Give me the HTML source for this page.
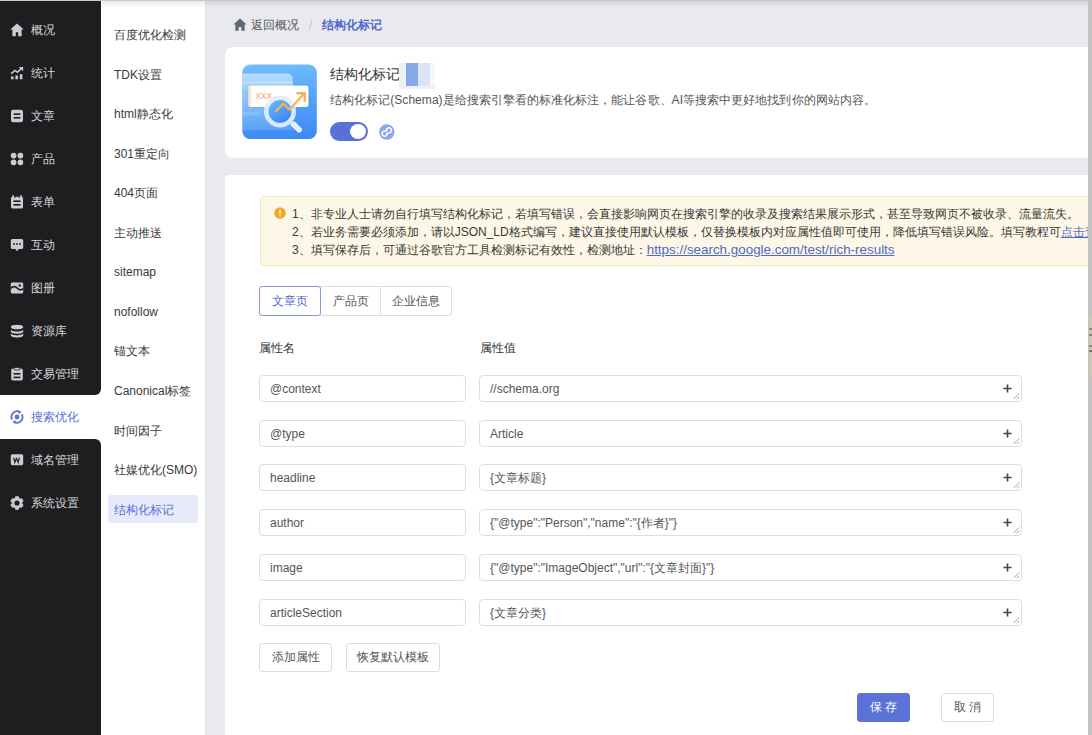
<!DOCTYPE html>
<html><head><meta charset="utf-8">
<style>
*{box-sizing:border-box;margin:0;padding:0}
html,body{width:1092px;height:735px;overflow:hidden;font-family:"Liberation Sans",sans-serif;font-size:12px;color:#333;background:#e9eaee}
.abs{position:absolute}
#side{position:absolute;left:0;top:0;width:101px;height:735px;background:#fff}
.dk{position:absolute;left:0;width:101px;background:#1e1e20}
.nav{position:absolute;left:0;width:101px;height:20px;color:#d6d6d8;font-size:12px;line-height:20px}
.nav svg{position:absolute;left:10px;top:3px;width:14px;height:14px}
.nav span{position:absolute;left:31px;top:0}
#sub{position:absolute;left:101px;top:0;width:104px;height:735px;background:#fff;box-shadow:1px 0 1px rgba(0,0,0,0.03)}
.si{position:absolute;left:13px;font-size:12px;line-height:16px;color:#3a3a3a;white-space:nowrap}
#topsh{position:absolute;left:102px;top:1px;width:990px;height:7px;background:linear-gradient(rgba(0,0,0,0.085),rgba(0,0,0,0))}
#topln{position:absolute;left:0;top:0;width:1092px;height:1px;background:#c8c8c8}
.card{position:absolute;background:#fff;border-radius:8px}
.inp{position:absolute;height:27px;border:1px solid #dedede;border-radius:4px;background:#fff;font-size:12px;line-height:27px;padding-left:10px;color:#555;white-space:nowrap}
.btn{position:absolute;height:30px;border:1px solid #dddddd;border-radius:3px;background:#fff;font-size:12px;line-height:28px;text-align:center;color:#555}
.plus{position:absolute;right:9px;top:8px;width:9px;height:9px}
.grip{position:absolute;right:1px;bottom:1px;width:8px;height:8px}
.lnk{color:#5169c4;text-decoration:underline}
</style></head><body>
<div id="side">
  <div class="dk" style="top:0;height:395px;border-bottom-right-radius:6px"></div>
  <div class="dk" style="top:439px;height:296px;border-top-right-radius:6px"></div>
  <div class="nav" style="top:20px"><svg viewBox="0 0 14 14"><path d="M7 0.6L0.3 6.6h2.1V13.2h3.4V9.3h2.4v3.9h3.4V6.6h2.1z" fill="#cdcdd1"/></svg><span>概况</span></div>
  <div class="nav" style="top:63px"><svg viewBox="0 0 14 14"><path d="M1 10.6h2.6v2.6H1zM5.4 9.4h2.6v3.8H5.4zM9.8 8.2h2.6v5H9.8z" fill="#cdcdd1"/><path d="M1.2 7.6L4.9 4.4l2.6 1.9L11.6 2.2" stroke="#cdcdd1" stroke-width="1.6" fill="none"/><path d="M8.8 0.9h4.3v4.3z" fill="#cdcdd1"/></svg><span>统计</span></div>
  <div class="nav" style="top:106px"><svg viewBox="0 0 14 14"><rect x="1" y="0.7" width="12" height="12.6" rx="2.2" fill="#cdcdd1"/><rect x="3.6" y="4.3" width="6.8" height="1.6" fill="#1e1e20"/><rect x="3.6" y="8" width="6.8" height="1.6" fill="#1e1e20"/></svg><span>文章</span></div>
  <div class="nav" style="top:149px"><svg viewBox="0 0 14 14"><rect x="0.8" y="0.8" width="5.6" height="5.6" rx="2.6" fill="#cdcdd1"/><rect x="7.6" y="0.8" width="5.6" height="5.6" rx="2.6" fill="#cdcdd1"/><rect x="0.8" y="7.6" width="5.6" height="5.6" rx="2.6" fill="#cdcdd1"/><rect x="7.6" y="7.6" width="5.6" height="5.6" rx="2.6" fill="#cdcdd1"/></svg><span>产品</span></div>
  <div class="nav" style="top:192px"><svg viewBox="0 0 14 14"><path d="M3 0.3v2M11 0.3v2" stroke="#cdcdd1" stroke-width="1.6"/><rect x="1" y="1.8" width="12" height="11.8" rx="1.6" fill="#cdcdd1"/><rect x="3.4" y="5.4" width="7.2" height="1.6" fill="#1e1e20"/><rect x="3.4" y="9" width="7.2" height="1.6" fill="#1e1e20"/><path d="M4.8 1.3v1.5M9.2 1.3v1.5" stroke="#1e1e20" stroke-width="1.2"/></svg><span>表单</span></div>
  <div class="nav" style="top:235px"><svg viewBox="0 0 14 14"><path d="M2.4 1h9.2A1.6 1.6 0 0 1 13.2 2.6v6.8A1.6 1.6 0 0 1 11.6 11H8.6L7 13.2 5.4 11H2.4A1.6 1.6 0 0 1 0.8 9.4V2.6A1.6 1.6 0 0 1 2.4 1z" fill="#cdcdd1"/><circle cx="4" cy="6" r="0.9" fill="#1e1e20"/><circle cx="7" cy="6" r="0.9" fill="#1e1e20"/><circle cx="10" cy="6" r="0.9" fill="#1e1e20"/></svg><span>互动</span></div>
  <div class="nav" style="top:278px"><svg viewBox="0 0 14 14"><path d="M2.2 1.4h9.6a1.4 1.4 0 0 1 1.4 1.4v8.4a1.4 1.4 0 0 1-1.4 1.4H2.2a1.4 1.4 0 0 1-1.4-1.4V2.8a1.4 1.4 0 0 1 1.4-1.4z" fill="#cdcdd1"/><path d="M0.8 7.4C3 5 5.5 5.2 7.4 7.2S11.4 9.2 13.2 7.6" stroke="#1e1e20" stroke-width="1.6" fill="none"/><circle cx="9.8" cy="4.4" r="1.2" fill="#1e1e20"/></svg><span>图册</span></div>
  <div class="nav" style="top:321px"><svg viewBox="0 0 14 14"><ellipse cx="7" cy="3" rx="6.2" ry="2.3" fill="#cdcdd1"/><path d="M0.8 5.3c0 1.3 2.8 2.3 6.2 2.3s6.2-1 6.2-2.3v2.2c0 1.3-2.8 2.3-6.2 2.3S0.8 8.8 0.8 7.5z" fill="#cdcdd1"/><path d="M0.8 9.1c0 1.3 2.8 2.3 6.2 2.3s6.2-1 6.2-2.3v2.2c0 1.3-2.8 2.3-6.2 2.3S0.8 12.6 0.8 11.3z" fill="#cdcdd1"/></svg><span>资源库</span></div>
  <div class="nav" style="top:364px"><svg viewBox="0 0 14 14"><rect x="1.2" y="1.6" width="11.6" height="12" rx="1.8" fill="#cdcdd1"/><rect x="4.2" y="0.4" width="5.6" height="2.6" rx="0.8" fill="#cdcdd1" stroke="#1e1e20" stroke-width="0.8"/><rect x="3.6" y="6" width="6.8" height="1.6" fill="#1e1e20"/><rect x="3.6" y="9.6" width="6.8" height="1.6" fill="#1e1e20"/></svg><span>交易管理</span></div>
  <div class="nav" style="top:407px;color:#5b6fd6"><svg viewBox="0 0 14 14"><path d="M2.2 9.6A5.6 5.6 0 0 1 9.8 2" stroke="#5b6fd6" stroke-width="1.8" fill="none"/><path d="M11.8 4.4A5.6 5.6 0 0 1 4.2 12" stroke="#5b6fd6" stroke-width="1.8" fill="none"/><path d="M8.4 0.3l3.2 1.8-3 2z" fill="#5b6fd6"/><path d="M5.6 13.7l-3.2-1.8 3-2z" fill="#5b6fd6"/><circle cx="7" cy="7" r="2.4" fill="#5b6fd6"/></svg><span>搜索优化</span></div>
  <div class="nav" style="top:450px"><svg viewBox="0 0 14 14"><rect x="0.8" y="1.2" width="12.4" height="11" rx="1.6" fill="#cdcdd1"/><path d="M3.6 4.6l1.2 4.8 1.6-4h0.2l1.6 4 1.2-4.8" stroke="#2a2a2c" stroke-width="1.25" fill="none"/></svg><span>域名管理</span></div>
  <div class="nav" style="top:493px"><svg viewBox="0 0 14 14"><path d="M5.56 0.76 L8.44 0.76 L8.84 2.46 L10.02 3.14 L11.68 2.64 L13.12 5.13 L11.85 6.32 L11.85 7.68 L13.12 8.87 L11.68 11.36 L10.02 10.86 L8.84 11.54 L8.44 13.24 L5.56 13.24 L5.16 11.54 L3.98 10.86 L2.32 11.36 L0.88 8.87 L2.15 7.68 L2.15 6.32 L0.88 5.13 L2.32 2.64 L3.98 3.14 L5.16 2.46Z" fill="#cdcdd1" stroke="#cdcdd1" stroke-width="1" stroke-linejoin="round"/><circle cx="7" cy="7" r="2.6" fill="#1e1e20"/></svg><span>系统设置</span></div>
</div>
<div id="sub">
  <div class="si" style="top:27px">百度优化检测</div>
  <div class="si" style="top:67px">TDK设置</div>
  <div class="si" style="top:106px">html静态化</div>
  <div class="si" style="top:146px">301重定向</div>
  <div class="si" style="top:185px">404页面</div>
  <div class="si" style="top:225px">主动推送</div>
  <div class="si" style="top:264px">sitemap</div>
  <div class="si" style="top:304px">nofollow</div>
  <div class="si" style="top:343px">锚文本</div>
  <div class="si" style="top:383px">Canonical标签</div>
  <div class="si" style="top:423px">时间因子</div>
  <div class="si" style="top:462px">社媒优化(SMO)</div>
  <div class="abs" style="left:7px;top:495px;width:90px;height:28px;background:#e7eafb;border-radius:3px"></div>
  <div class="si" style="top:502px;color:#5b6fd6">结构化标记</div>
</div>
<div id="topsh"></div><div id="topln"></div>

<!-- breadcrumb -->
<svg class="abs" style="left:233px;top:18px" width="14" height="13" viewBox="0 0 14 13"><path d="M7 0.6L0.4 6.6h2V12.8h3.2V9h2.8v3.8h3.2V6.6h2z" fill="#5f6672"/></svg>
<div class="abs" style="left:233px;top:18px;font-size:12px;line-height:14px;color:#555">
  <span style="position:absolute;left:18px;top:0;white-space:nowrap">返回概况</span>
  <span style="position:absolute;left:76px;top:0;color:#c0c4cc">/</span>
  <span style="position:absolute;left:89px;top:0;white-space:nowrap;color:#5368cf;font-weight:bold">结构化标记</span>
</div>

<!-- card 1 -->
<div class="card" style="left:225px;top:47px;width:900px;height:111px"></div>
<svg class="abs" style="left:242px;top:64px" width="75" height="75" viewBox="0 0 75 75">
  <defs><linearGradient id="g1" x1="0.2" y1="0" x2="0.3" y2="1"><stop offset="0" stop-color="#70bdfc"/><stop offset="1" stop-color="#3d8bf4"/></linearGradient>
  <linearGradient id="g3" x1="0" y1="0" x2="0" y2="1"><stop offset="0" stop-color="#c2e2fe" stop-opacity="0.85"/><stop offset="1" stop-color="#9dcffc" stop-opacity="0.25"/></linearGradient>
  <linearGradient id="g2" x1="0" y1="0" x2="0.6" y2="1"><stop offset="0" stop-color="#6fbafc"/><stop offset="1" stop-color="#3a89f3"/></linearGradient></defs>
  <rect x="0.3" y="0.6" width="74.5" height="74.5" rx="8" fill="url(#g1)"/>
  <path d="M0.3 9.5h45a5.5 5.5 0 0 1 5.5 5.5V66H0.3z" fill="url(#g3)"/><rect x="0.3" y="17" width="50.5" height="3" fill="#d2eafe" opacity="0.5"/>
  <rect x="0.3" y="27" width="14" height="3.4" fill="#8cc6fb" opacity="0.8"/>
  <rect x="0.3" y="48" width="17" height="3.4" fill="#8cc6fb" opacity="0.7"/>
  <rect x="6.5" y="21.5" width="60" height="21.5" rx="2" fill="#ffffff" style="filter:drop-shadow(0 0.5px 0.8px rgba(30,90,180,0.25))"/>
  <rect x="6.5" y="21.8" width="2.4" height="20.4" fill="#fde2c6"/>
  <text x="13.2" y="35" font-family="Liberation Sans" font-size="8.6" fill="#f2a061" textLength="17" lengthAdjust="spacingAndGlyphs">XXX</text>
  <path d="M51.5 60.2l5.6 5.6" stroke="#e3f1ff" stroke-width="5.6" stroke-linecap="round"/>
  <circle cx="38" cy="47.4" r="16" fill="#dfeffe" opacity="0.92"/>
  <circle cx="38" cy="47.4" r="11.4" fill="url(#g2)"/>
  <path d="M33.2 48L41.4 39.6 47.6 45.6 62 29.8" stroke="#f4b458" stroke-width="2.3" fill="none" stroke-linejoin="round"/>
  <path d="M54.4 29.2h8.4v8.6" stroke="#f4b458" stroke-width="2.4" fill="none" stroke-linejoin="miter"/>
</svg>
<div class="abs" style="left:330px;top:65px;font-size:14px;line-height:18px;color:#333">结构化标记</div>
<div class="abs" style="left:399px;top:63px;width:36px;height:26px;background:#eef0f4"></div><div class="abs" style="left:430px;top:63px;width:5px;height:23px;background:#f7f8fa"></div>
<div class="abs" style="left:406px;top:63px;width:12px;height:23px;background:#85a9e6"></div>
<div class="abs" style="left:418px;top:63px;width:12px;height:23px;background:#dce5f7"></div>
<div class="abs" style="left:330px;top:92px;font-size:12px;line-height:16px;color:#555;white-space:nowrap;letter-spacing:0.05px">结构化标记(Schema)是给搜索引擎看的标准化标注，能让谷歌、AI等搜索中更好地找到你的网站内容。</div>
<div class="abs" style="left:330px;top:122px;width:38px;height:19px;border-radius:10px;background:#5a70d4"></div>
<div class="abs" style="left:350px;top:124px;width:16px;height:15px;border-radius:50%;background:#fff"></div>
<svg class="abs" style="left:379px;top:123.5px" width="16" height="16" viewBox="0 0 16 16"><circle cx="7.8" cy="8" r="7.7" fill="#8da5ee"/><g stroke="#fff" stroke-width="1.5" fill="none" stroke-linecap="round"><path d="M7.3 6.1A2.6 2.6 0 1 1 9.2 8.9L7.6 9.6"/><path d="M8.3 9.9A2.6 2.6 0 1 1 6.4 7.1L8 6.4"/></g></svg>

<!-- card 2 -->
<div class="card" style="left:225px;top:175px;width:900px;height:600px;border-radius:4px"></div>
<div class="abs" style="left:260px;top:196px;width:840px;height:70px;background:#fdf7e7;border:1px solid #f6e8b4;border-radius:4px"></div>
<svg class="abs" style="left:274px;top:207px" width="12" height="12" viewBox="0 0 12 12"><circle cx="6" cy="6" r="5.8" fill="#f5a623"/><path d="M6 2.8v3.6" stroke="#fff" stroke-width="1.4" stroke-linecap="round"/><circle cx="6" cy="8.6" r="0.8" fill="#fff"/></svg>
<div class="abs" style="left:292px;top:205px;font-size:12px;line-height:18px;color:#383838;white-space:nowrap">1、非专业人士请勿自行填写结构化标记，若填写错误，会直接影响网页在搜索引擎的收录及搜索结果展示形式，甚至导致网页不被收录、流量流失。<br>2、若业务需要必须添加，请以JSON_LD格式编写，建议直接使用默认模板，仅替换模板内对应属性值即可使用，降低填写错误风险。填写教程可<span class="lnk">点击查看</span><br>3、填写保存后，可通过谷歌官方工具检测标记有效性，检测地址：<span class="lnk" style="font-size:13.4px">https://search.google.com/test/rich-results</span></div>

<!-- tabs -->
<div class="btn" style="left:259px;top:286px;width:62px;height:30px;border-color:#8a9ad2;color:#5468c8;z-index:2">文章页</div>
<div class="btn" style="left:320px;top:286px;width:61px;height:30px;border-radius:0">产品页</div>
<div class="btn" style="left:380px;top:286px;width:72px;height:30px;border-top-left-radius:0;border-bottom-left-radius:0">企业信息</div>

<div class="abs" style="left:259px;top:340px;line-height:16px;color:#333;font-weight:500">属性名</div>
<div class="abs" style="left:480px;top:340px;line-height:16px;color:#333;font-weight:500">属性值</div>
<div class="inp" style="left:259px;top:375px;width:207px">@context</div>
<div class="inp" style="left:479px;top:375px;width:543px">//schema.org<svg class="plus" viewBox="0 0 10 10"><path d="M5 0.5v9M0.5 5h9" stroke="#444" stroke-width="1.8"/></svg><svg class="grip" viewBox="0 0 8 8"><path d="M7.2 1.4L1.6 7M7.2 4.6L4.6 7.2" stroke="#8a8a8a" stroke-width="0.8"/></svg></div>
<div class="inp" style="left:259px;top:420px;width:207px">@type</div>
<div class="inp" style="left:479px;top:420px;width:543px">Article<svg class="plus" viewBox="0 0 10 10"><path d="M5 0.5v9M0.5 5h9" stroke="#444" stroke-width="1.8"/></svg><svg class="grip" viewBox="0 0 8 8"><path d="M7.2 1.4L1.6 7M7.2 4.6L4.6 7.2" stroke="#8a8a8a" stroke-width="0.8"/></svg></div>
<div class="inp" style="left:259px;top:464px;width:207px">headline</div>
<div class="inp" style="left:479px;top:464px;width:543px">{文章标题}<svg class="plus" viewBox="0 0 10 10"><path d="M5 0.5v9M0.5 5h9" stroke="#444" stroke-width="1.8"/></svg><svg class="grip" viewBox="0 0 8 8"><path d="M7.2 1.4L1.6 7M7.2 4.6L4.6 7.2" stroke="#8a8a8a" stroke-width="0.8"/></svg></div>
<div class="inp" style="left:259px;top:509px;width:207px">author</div>
<div class="inp" style="left:479px;top:509px;width:543px">{"@type":"Person","name":"{作者}"}<svg class="plus" viewBox="0 0 10 10"><path d="M5 0.5v9M0.5 5h9" stroke="#444" stroke-width="1.8"/></svg><svg class="grip" viewBox="0 0 8 8"><path d="M7.2 1.4L1.6 7M7.2 4.6L4.6 7.2" stroke="#8a8a8a" stroke-width="0.8"/></svg></div>
<div class="inp" style="left:259px;top:554px;width:207px">image</div>
<div class="inp" style="left:479px;top:554px;width:543px">{"@type":"ImageObject","url":"{文章封面}"}<svg class="plus" viewBox="0 0 10 10"><path d="M5 0.5v9M0.5 5h9" stroke="#444" stroke-width="1.8"/></svg><svg class="grip" viewBox="0 0 8 8"><path d="M7.2 1.4L1.6 7M7.2 4.6L4.6 7.2" stroke="#8a8a8a" stroke-width="0.8"/></svg></div>
<div class="inp" style="left:259px;top:599px;width:207px">articleSection</div>
<div class="inp" style="left:479px;top:599px;width:543px">{文章分类}<svg class="plus" viewBox="0 0 10 10"><path d="M5 0.5v9M0.5 5h9" stroke="#444" stroke-width="1.8"/></svg><svg class="grip" viewBox="0 0 8 8"><path d="M7.2 1.4L1.6 7M7.2 4.6L4.6 7.2" stroke="#8a8a8a" stroke-width="0.8"/></svg></div>
<div class="btn" style="left:259px;top:643px;width:73px;height:29px;line-height:27px">添加属性</div>
<div class="btn" style="left:346px;top:643px;width:94px;height:29px;line-height:27px">恢复默认模板</div>
<div class="btn" style="left:857px;top:693px;width:53px;height:29px;line-height:27px;font-weight:500;background:#5b72d9;border-color:#5b72d9;color:#fff;letter-spacing:3px;text-indent:3px">保存</div>
<div class="btn" style="left:941px;top:693px;width:53px;height:29px;line-height:27px;letter-spacing:3px;text-indent:3px">取消</div>
<div class="abs" style="left:1088px;top:0;width:4px;height:735px;background:#c2c2c2"></div>
<div class="abs" style="left:1089px;top:315px;width:3px;height:62px;background:#cbc8b8"></div>
<div class="abs" style="left:1089px;top:328px;width:3px;height:2px;background:#8e8d86"></div>
<div class="abs" style="left:1089px;top:334px;width:3px;height:2px;background:#84837c"></div>
<div class="abs" style="left:1089px;top:345px;width:3px;height:2px;background:#8e8d86"></div>
<div class="abs" style="left:1089px;top:350px;width:3px;height:2px;background:#7a7972"></div>
</body></html>
